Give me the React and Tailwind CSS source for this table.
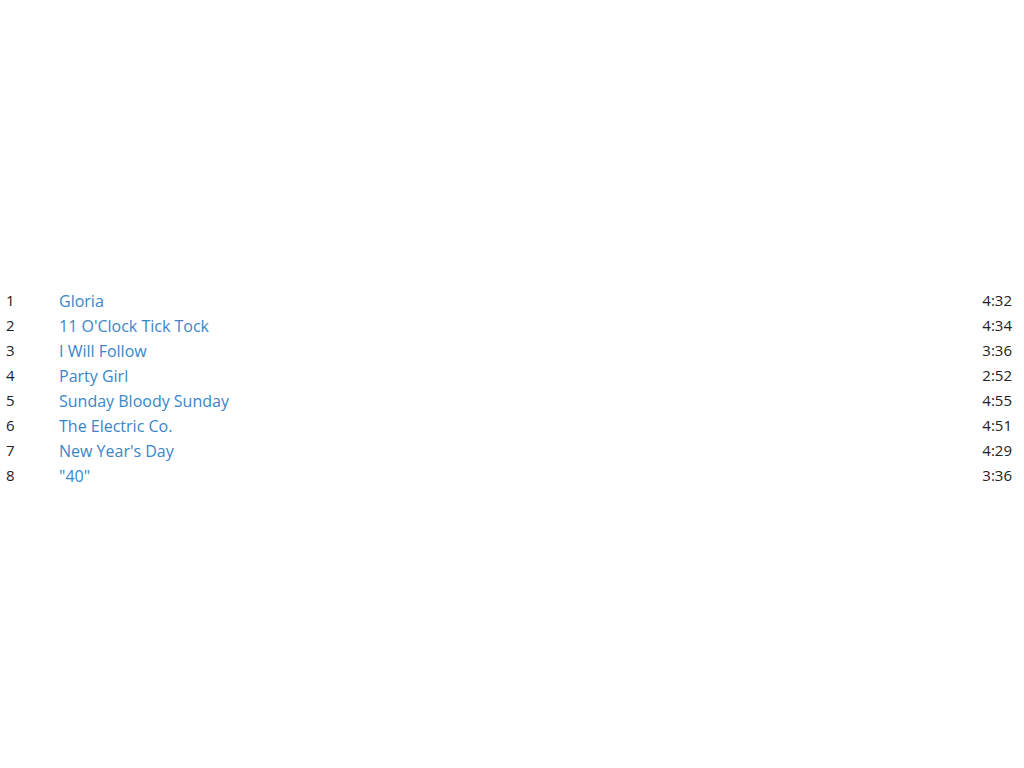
import React from 'react';

const tracks = [
    ['1', 'Gloria', '4:32'],
    ['2', "11 O'Clock Tick Tock", '4:34'],
    ['3', 'I Will Follow', '3:36'],
    ['4', 'Party Girl', '2:52'],
    ['5', 'Sunday Bloody Sunday', '4:55'],
    ['6', 'The Electric Co.', '4:51'],
    ['7', "New Year's Day", '4:29'],
    ['8', '"40"', '3:36'],
];

export default function App() {
    return (
        <div className="w-[1024px] h-[768px] bg-white flex items-center font-['Open_Sans',sans-serif] text-[16px] text-[#222]">
            <div className="w-full flex flex-col pt-[8px]">
                {tracks.map(([n, title, time]) => (
                    <div key={n} className="flex items-center h-[25px] pl-[6px] pr-[12px]">
                        <span className="w-[53px] text-[15px]">{n}</span>
                        <a href="#" className="flex-1 text-[#3a86c8]">{title}</a>
                        <span className="text-[15px]">{time}</span>
                    </div>
                ))}
            </div>
        </div>
    );
}
